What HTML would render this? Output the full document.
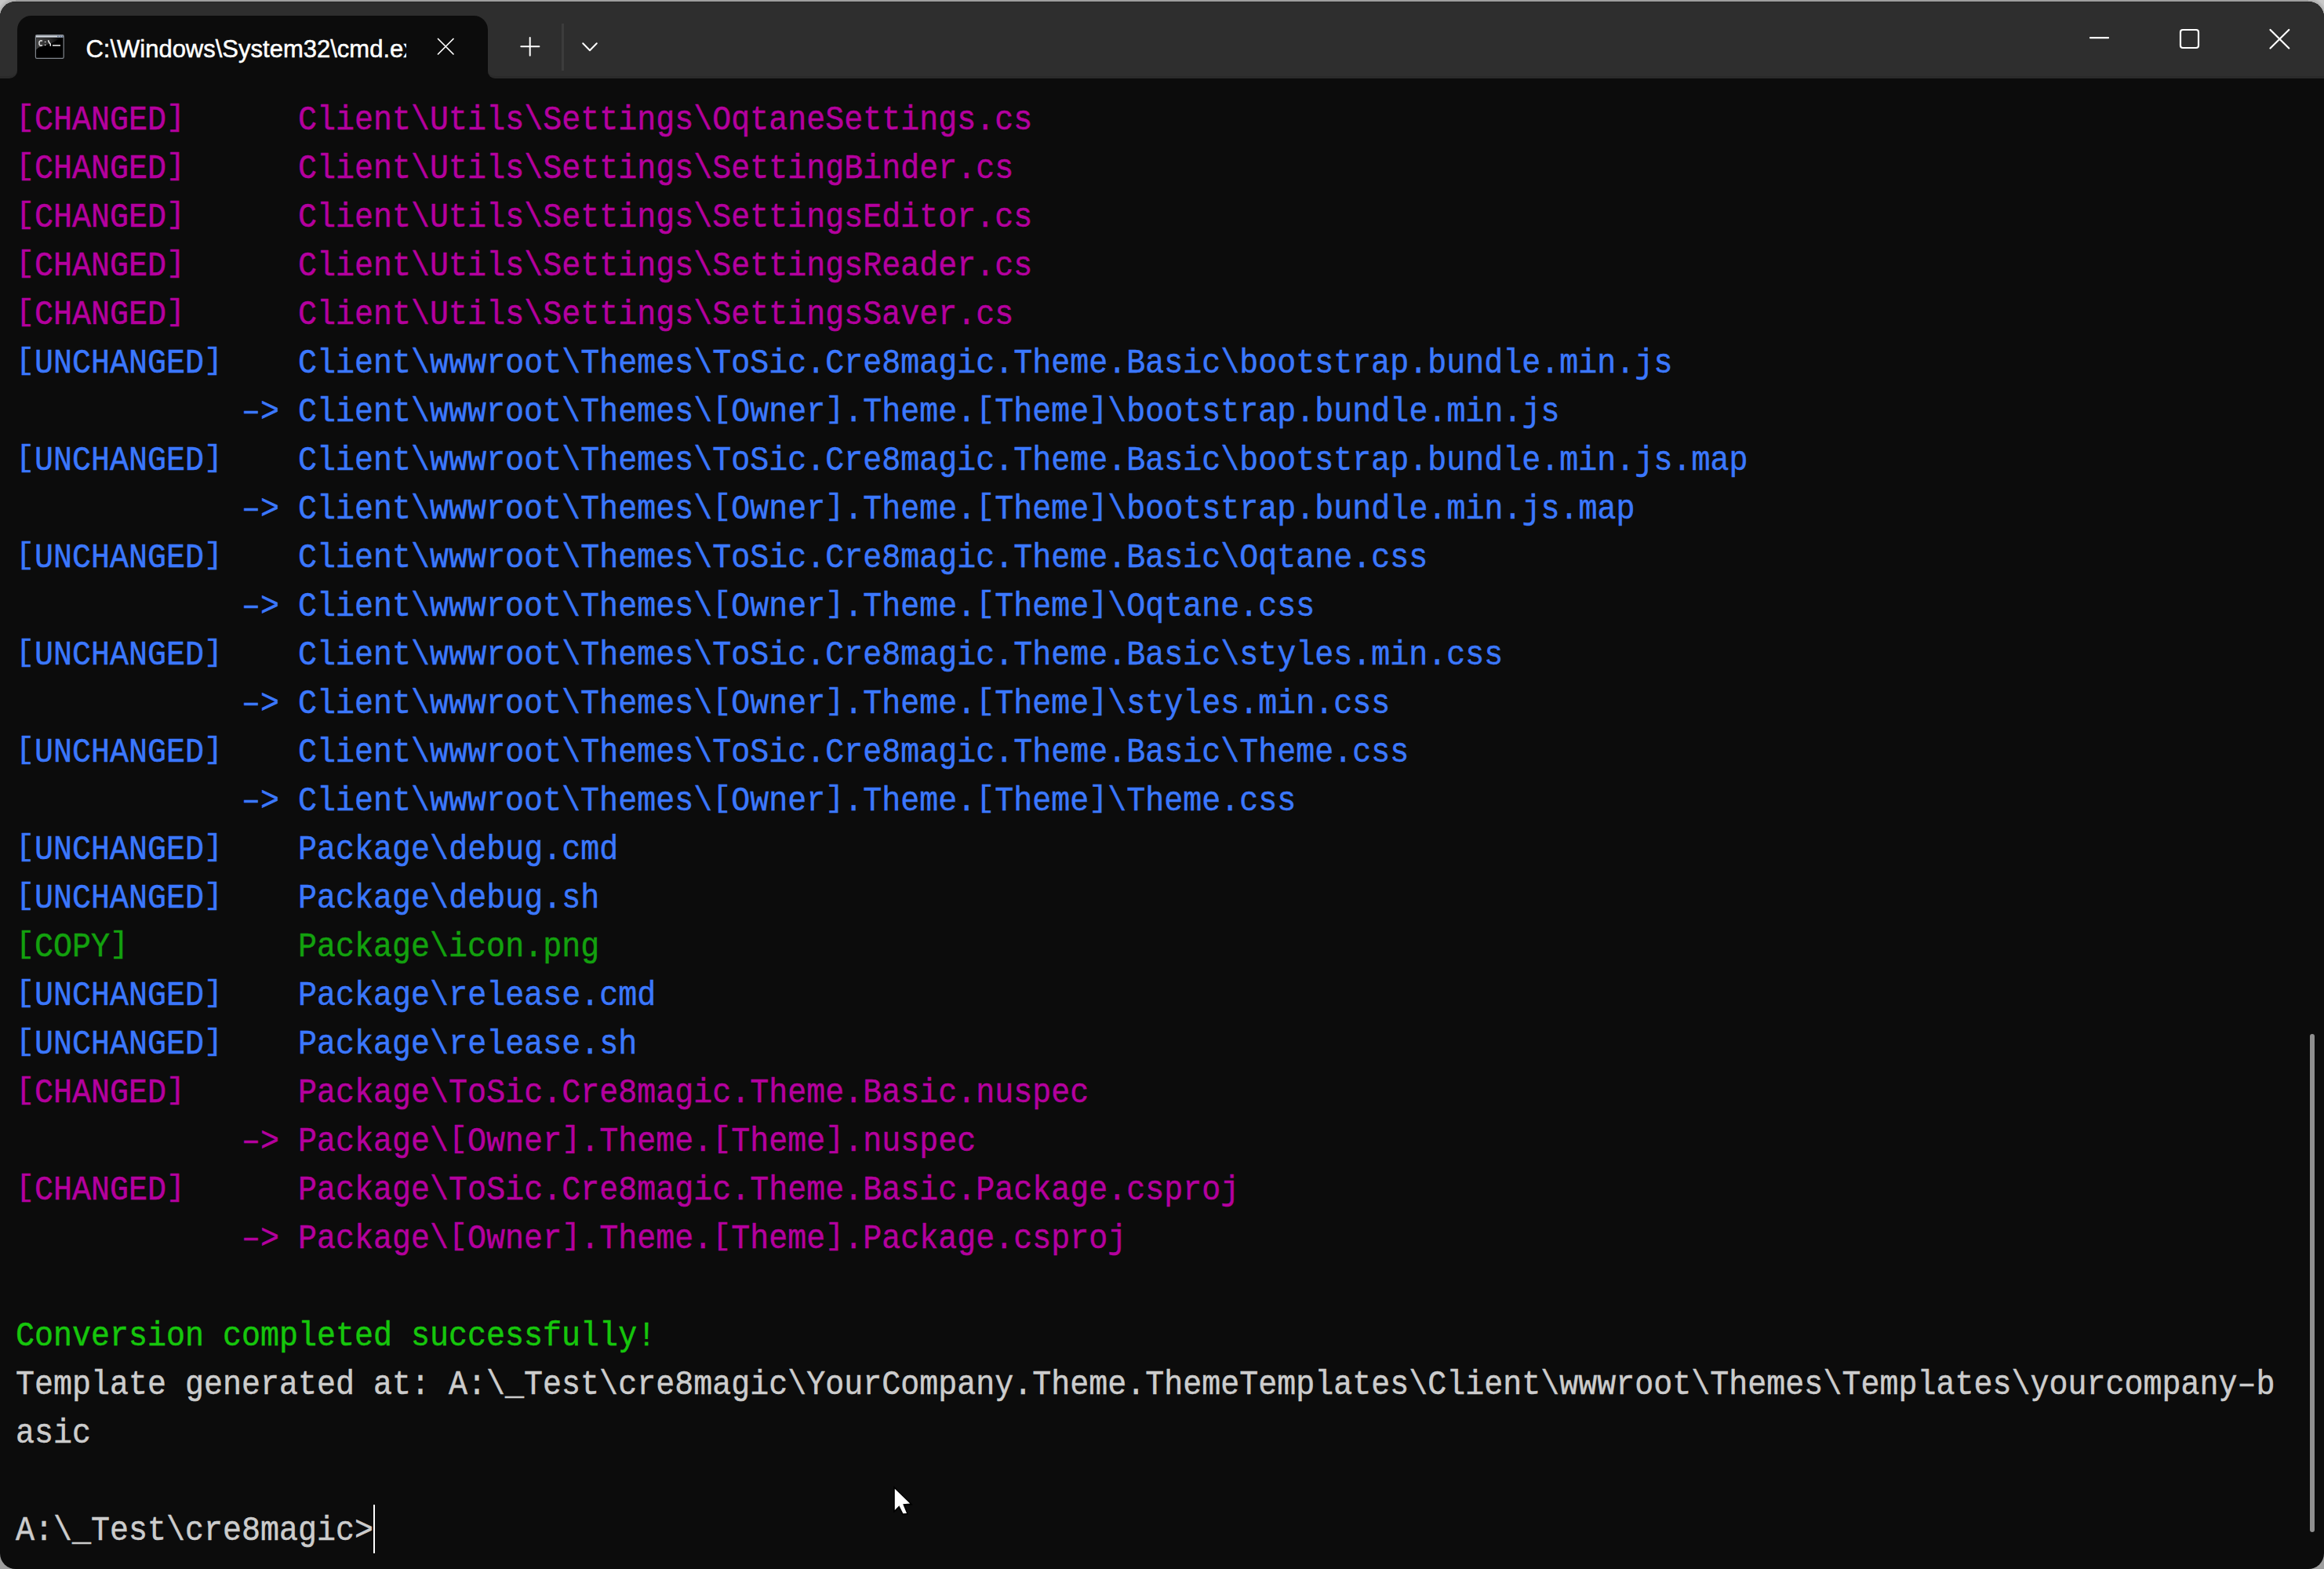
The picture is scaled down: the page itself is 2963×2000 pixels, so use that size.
<!DOCTYPE html>
<html>
<head>
<meta charset="utf-8">
<style>
html,body{margin:0;padding:0;}
body{width:2963px;height:2000px;position:relative;overflow:hidden;background:#9e9e9e;}
.cn{position:absolute;width:20px;height:20px;}
#win{position:absolute;left:0;top:2px;width:2963px;height:1998px;border-radius:20px;overflow:hidden;background:#0c0c0c;}
.tb{position:absolute;background:#2e2e2e;}
#tab{position:absolute;left:22px;top:18px;width:600px;height:90px;background:#0c0c0c;border-radius:18px 18px 0 0;}
.ln{position:absolute;left:20px;height:62px;line-height:62px;font-family:"Liberation Mono",monospace;font-size:40px;white-space:pre;color:#cccccc;transform:scaleY(1.10);transform-origin:0 0;margin-top:-0.5px;-webkit-text-stroke:0.45px currentColor;}
i{font-style:normal;display:inline-block;transform-origin:0 12px;transform:translateY(-1px) scaleY(0.87);}
.m{color:#b4009e}.b{color:#3b78ff}.g{color:#13a10e}.G{color:#16c60c}
#title{position:absolute;left:109.4px;top:42.5px;width:409px;overflow:hidden;white-space:pre;font-family:"Liberation Sans",sans-serif;font-size:31px;color:#ffffff;line-height:40px;-webkit-text-stroke:0.5px #fff;}
</style>
</head>
<body>
<div class="cn" style="left:0;top:0;background:radial-gradient(circle at 20px 20px,#a4a4a4 17px,#c8c8c8 24px);"></div>
<div class="cn" style="right:0;top:0;background:radial-gradient(circle at 0 20px,#a4a4a4 17px,#c8c8c8 24px);"></div>
<div id="win">
  <div class="tb" style="left:0;top:0;width:2963px;height:40px;"></div>
  <div class="tb" style="left:0;top:0;width:22px;height:95px;border-bottom:3px solid #2a2a2a;border-bottom-right-radius:10px;"></div>
  <div class="tb" style="left:622px;top:0;width:2341px;height:95px;border-bottom:3px solid #2a2a2a;border-bottom-left-radius:9px;"></div>
  <div style="position:absolute;left:0;top:0;width:2963px;height:1px;background:#262626;"></div>
  <div id="tab"></div>
</div>
<div id="title">C:\Windows\System32\cmd.exe</div>
<svg id="icons" width="2963" height="110" style="position:absolute;left:0;top:0">
  <!-- cmd icon -->
  <rect x="45.4" y="44.7" width="35.8" height="29.6" rx="1.6" fill="#000" stroke="#80858c" stroke-width="1.2"/>
  <rect x="46" y="45.3" width="34.6" height="2.4" fill="#d3d9e0"/>
  <rect x="73.2" y="45.5" width="1.6" height="1.9" fill="#5a6f90"/><rect x="76" y="45.5" width="1.6" height="1.9" fill="#5a6f90"/><rect x="78.6" y="45.5" width="1.6" height="1.9" fill="#5a6f90"/>
  <linearGradient id="gl2" x1="46" y1="0" x2="78" y2="0" gradientUnits="userSpaceOnUse"><stop offset="0" stop-color="#444"/><stop offset="0.55" stop-color="#2c2c2c"/><stop offset="1" stop-color="#000"/></linearGradient>
  <path d="M46.2 48.2 H77 Q71 53 64 55.8 Q57 58.4 52 59.4 Q48 60.4 46.2 63.5 Z" fill="url(#gl2)"/>
  <path d="M54 52.3 Q51 51 50 53.5 V56.5 Q51 59 54 57.8" stroke="#e0e0e0" stroke-width="1.5" fill="none"/>
  <rect x="56.9" y="52.8" width="1.5" height="1.3" fill="#ddd"/><rect x="56.9" y="56.7" width="1.5" height="1.4" fill="#ddd"/>
  <path d="M61.5 51.2 L62.6 54.2 L64.2 56 L64.4 58.8" stroke="#f0f0f0" stroke-width="1.5" fill="none"/>
  <rect x="67" y="57" width="10" height="1.8" fill="#c8c8c8"/>
  <!-- tab close -->
  <path d="M558.5 49.5 L578 69 M578 49.5 L558.5 69" stroke="#fff" stroke-width="1.7" stroke-linecap="round"/>
  <!-- plus -->
  <path d="M664.3 59.3 H687.4 M675.7 48 V70.7" stroke="#fff" stroke-width="2" stroke-linecap="round"/>
  <!-- separator -->
  <rect x="716" y="30" width="3" height="60" fill="#3c3c3c"/>
  <!-- chevron -->
  <path d="M743.2 55.3 L752 64.2 L760.8 55.3" stroke="#fff" stroke-width="2" fill="none" stroke-linecap="round" stroke-linejoin="round"/>
  <!-- minimize -->
  <path d="M2665 48.2 H2688" stroke="#fff" stroke-width="2.2" stroke-linecap="round"/>
  <!-- maximize -->
  <rect x="2780" y="38" width="23" height="23" rx="3" fill="none" stroke="#fff" stroke-width="2.2"/>
  <!-- close -->
  <path d="M2894.5 38 L2918.3 61.5 M2918.3 38 L2894.5 61.5" stroke="#fff" stroke-width="2.2" stroke-linecap="round"/>
</svg>

<div class="ln m" style="top:120px"><i>[</i>CHANGED<i>]</i>      Client\Utils\Settings\OqtaneSettings.cs</div>
<div class="ln m" style="top:182px"><i>[</i>CHANGED<i>]</i>      Client\Utils\Settings\SettingBinder.cs</div>
<div class="ln m" style="top:244px"><i>[</i>CHANGED<i>]</i>      Client\Utils\Settings\SettingsEditor.cs</div>
<div class="ln m" style="top:306px"><i>[</i>CHANGED<i>]</i>      Client\Utils\Settings\SettingsReader.cs</div>
<div class="ln m" style="top:368px"><i>[</i>CHANGED<i>]</i>      Client\Utils\Settings\SettingsSaver.cs</div>
<div class="ln b" style="top:430px"><i>[</i>UNCHANGED<i>]</i>    Client\wwwroot\Themes\ToSic.Cre8magic.Theme.Basic\bootstrap.bundle.min.js</div>
<div class="ln b" style="top:492px">            –> Client\wwwroot\Themes\<i>[</i>Owner<i>]</i>.Theme.<i>[</i>Theme<i>]</i>\bootstrap.bundle.min.js</div>
<div class="ln b" style="top:554px"><i>[</i>UNCHANGED<i>]</i>    Client\wwwroot\Themes\ToSic.Cre8magic.Theme.Basic\bootstrap.bundle.min.js.map</div>
<div class="ln b" style="top:616px">            –> Client\wwwroot\Themes\<i>[</i>Owner<i>]</i>.Theme.<i>[</i>Theme<i>]</i>\bootstrap.bundle.min.js.map</div>
<div class="ln b" style="top:678px"><i>[</i>UNCHANGED<i>]</i>    Client\wwwroot\Themes\ToSic.Cre8magic.Theme.Basic\Oqtane.css</div>
<div class="ln b" style="top:740px">            –> Client\wwwroot\Themes\<i>[</i>Owner<i>]</i>.Theme.<i>[</i>Theme<i>]</i>\Oqtane.css</div>
<div class="ln b" style="top:802px"><i>[</i>UNCHANGED<i>]</i>    Client\wwwroot\Themes\ToSic.Cre8magic.Theme.Basic\styles.min.css</div>
<div class="ln b" style="top:864px">            –> Client\wwwroot\Themes\<i>[</i>Owner<i>]</i>.Theme.<i>[</i>Theme<i>]</i>\styles.min.css</div>
<div class="ln b" style="top:926px"><i>[</i>UNCHANGED<i>]</i>    Client\wwwroot\Themes\ToSic.Cre8magic.Theme.Basic\Theme.css</div>
<div class="ln b" style="top:988px">            –> Client\wwwroot\Themes\<i>[</i>Owner<i>]</i>.Theme.<i>[</i>Theme<i>]</i>\Theme.css</div>
<div class="ln b" style="top:1050px"><i>[</i>UNCHANGED<i>]</i>    Package\debug.cmd</div>
<div class="ln b" style="top:1112px"><i>[</i>UNCHANGED<i>]</i>    Package\debug.sh</div>
<div class="ln g" style="top:1174px"><i>[</i>COPY<i>]</i>         Package\icon.png</div>
<div class="ln b" style="top:1236px"><i>[</i>UNCHANGED<i>]</i>    Package\release.cmd</div>
<div class="ln b" style="top:1298px"><i>[</i>UNCHANGED<i>]</i>    Package\release.sh</div>
<div class="ln m" style="top:1360px"><i>[</i>CHANGED<i>]</i>      Package\ToSic.Cre8magic.Theme.Basic.nuspec</div>
<div class="ln m" style="top:1422px">            –> Package\<i>[</i>Owner<i>]</i>.Theme.<i>[</i>Theme<i>]</i>.nuspec</div>
<div class="ln m" style="top:1484px"><i>[</i>CHANGED<i>]</i>      Package\ToSic.Cre8magic.Theme.Basic.Package.csproj</div>
<div class="ln m" style="top:1546px">            –> Package\<i>[</i>Owner<i>]</i>.Theme.<i>[</i>Theme<i>]</i>.Package.csproj</div>
<div class="ln G" style="top:1670px">Conversion completed successfully!</div>
<div class="ln" style="top:1732px">Template generated at: A:\_Test\cre8magic\YourCompany.Theme.ThemeTemplates\Client\wwwroot\Themes\Templates\yourcompany–b</div>
<div class="ln" style="top:1794px">asic</div>
<div class="ln" style="top:1918px">A:\_Test\cre8magic></div>
<div id="thumb" style="position:absolute;left:2945px;top:1317.5px;width:6px;height:635px;border-radius:3px;background:#8f8f8f;"></div>
<div id="caret" style="position:absolute;left:476.4px;top:1918px;width:1.9px;height:61.5px;background:#ffffff;"></div>
<svg style="position:absolute;left:1130px;top:1888px" width="40" height="50">
  <path d="M9.2 6 L34 30.5 L24 31 L28 42.5 L20.5 43.5 L16 34.5 L9.2 40.5 Z" fill="#000"/>
  <path d="M10.8 9.8 L30.2 28.5 L21.2 29.3 L26 41 L21.4 41.3 L16.4 31.2 L10.8 36.9 Z" fill="#fff"/>
</svg>
</body>
</html>
